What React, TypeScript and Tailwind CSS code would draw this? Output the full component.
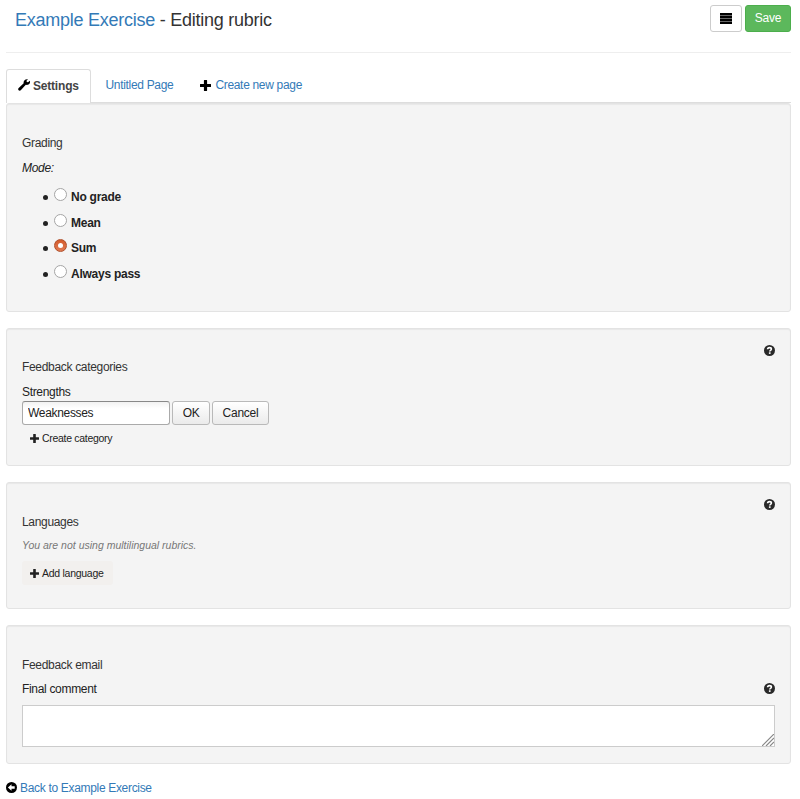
import type { ReactNode } from 'react';

const Plus = ({ className = 'h-[11px] w-[11px]' }: { className?: string }) => (
  <svg className={`block shrink-0 ${className}`} viewBox="0 0 11 11" fill="currentColor">
    <path d="M4.3 0h2.4a.4.4 0 0 1 .4.4v3.5h3.5a.4.4 0 0 1 .4.4v2.4a.4.4 0 0 1-.4.4H7.1v3.5a.4.4 0 0 1-.4.4H4.3a.4.4 0 0 1-.4-.4V7.1H.4a.4.4 0 0 1-.4-.4V4.3a.4.4 0 0 1 .4-.4h3.5V.4a.4.4 0 0 1 .4-.4z" />
  </svg>
);

const Wrench = () => (
  <svg className="mb-[2px] block h-3 w-3 shrink-0" viewBox="0 0 12 12" fill="#000">
    <path d="M10 .3 8.5 1.8l.3 1.1 1.2.3 1.9-1.5c.5 1.7-.1 3.1-1.4 3.8-.9.4-1.8.5-2.7.3L3 11.1c-.7.7-1.7.8-2.4.2-.6-.7-.6-1.6.1-2.3L5.7 4.3C5.1 2 7.2-.4 10 .3z" />
  </svg>
);

const Help = () => (
  <svg className="block h-[11px] w-[11px] shrink-0" viewBox="0 0 11 11">
    <circle cx="5.5" cy="5.5" r="5.5" fill="#292929" />
    <path d="M3.6 4.3C3.6 3.1 4.4 2.6 5.5 2.6s1.9.6 1.9 1.5c0 1.2-1.7 1.2-1.7 2.5" fill="none" stroke="#fff" strokeWidth="1.6" />
    <rect x="4.9" y="7.3" width="1.7" height="1.6" fill="#fff" />
  </svg>
);

const BackArrow = () => (
  <svg className="block h-[11px] w-[11px] shrink-0" viewBox="0 0 11 11">
    <circle cx="5.5" cy="5.5" r="5.5" fill="#000" />
    <path d="M1.9 5.5 5.5 2.2v2h3.2v2.6H5.5v2z" fill="#fff" />
  </svg>
);

const Panel = ({ className, children }: { className: string; children: ReactNode }) => (
  <section className={`flex w-[785px] flex-col rounded-[3px] border border-[#e3e3e3] bg-[#f4f4f4] px-[15px] shadow-[inset_0_1px_1px_rgba(0,0,0,0.05)] ${className}`}>
    {children}
  </section>
);

const Radio = ({ label, checked }: { label: string; checked?: boolean }) => (
  <li className="flex h-[25.8px] items-center">
    <span className="mt-[1px] h-[5px] w-[5px] rounded-full bg-[#222]" />
    <span
      className={`mb-[5px] ml-[6px] flex h-[13px] w-[13px] items-center justify-center rounded-full border ${
        checked ? 'border-[#b0502c] bg-linear-to-b from-[#d45a2a] to-[#e07a52]' : 'border-[#a5a5a5] bg-white'
      }`}
    >
      {checked && <span className="h-[5px] w-[5px] rounded-full bg-white" />}
    </span>
    <span className="ml-[4px] font-bold tracking-[-0.25px] text-[#222]">{label}</span>
  </li>
);

export default function App() {
  return (
    <div className="h-[799px] w-[800px] overflow-hidden bg-white pl-[6px] font-['Liberation_Sans',Arial,sans-serif] text-[12px] leading-[20px] tracking-[-0.32px] whitespace-nowrap text-[#333]">
      <header className="flex h-[53px] w-[785px] items-start border-b border-[#eee] pl-[9px]">
        <h1 className="mt-[9px] text-[18px] leading-[22px] tracking-[-0.25px]">
          <a className="text-[#337ab7]">Example Exercise</a> - Editing rubric
        </h1>
        <div className="mt-[5px] ml-auto flex gap-[3px]">
          <button className="flex h-[27px] w-8 items-center justify-center rounded-[3px] border border-[#ccc] bg-white">
            <svg className="block h-[11px] w-3" viewBox="0 0 12 11" fill="#000">
              <path fill="#666" d="M0 1h12v9H0z" />
              <path d="M0 0h12v2H0zM0 3h12v2H0zM0 6h12v2H0zM0 9h12v2H0z" />
            </svg>
          </button>
          <button className="h-[27px] w-[46px] rounded-[3px] border border-[#4cae4c] bg-[#5cb85c] pb-px tracking-[-0.2px] text-white">Save</button>
        </div>
      </header>

      <nav className="mt-4 flex h-[34px] w-[785px] border-b border-[#ddd]">
        <div className="flex h-[34px] w-[85px] items-center gap-[3px] rounded-t-[3px] border border-b-0 border-[#ddd] bg-white pb-px pl-[11px] font-bold tracking-[-0.2px] text-[#444]">
          <Wrench />
          Settings
        </div>
        <a className="ml-[14.5px] leading-[33px] text-[#337ab7]">Untitled Page</a>
        <a className="ml-[27px] flex items-center gap-[4px] text-[#337ab7]">
          <Plus className="h-[11px] w-[11px] text-black" />
          <span className="pb-px">Create new page</span>
        </a>
      </nav>

      <Panel className="h-[209px]">
        <h2 className="mt-[29px]">Grading</h2>
        <p className="mt-[5px] text-[#222] italic">Mode:</p>
        <ul className="mt-[6px] pl-[21px]">
          <Radio label="No grade" />
          <Radio label="Mean" />
          <Radio label="Sum" checked />
          <Radio label="Always pass" />
        </ul>
      </Panel>

      <Panel className="mt-4 h-[138px]">
        <div className="mt-[16px] flex h-[11px] justify-end"><Help /></div>
        <h2 className="mt-[1px]">Feedback categories</h2>
        <p className="mt-[5px] text-[#222]">Strengths</p>
        <div className="-mt-px flex gap-[2px] text-[#222]">
          <input
            readOnly
            value="Weaknesses"
            className="h-[24px] w-[148px] rounded-[3px] border border-[#aaa] border-t-[#888] bg-linear-to-b from-[#f2f2f2] to-white to-30% px-[5px] tracking-[-0.32px] outline-none"
          />
          <button className="h-[24px] w-[38px] rounded-[3px] border border-[#b9b9b9] bg-linear-to-b from-white to-[#ebebeb]">OK</button>
          <button className="h-[24px] w-[57px] rounded-[3px] border border-[#b9b9b9] bg-linear-to-b from-white to-[#ebebeb] tracking-[-0.25px]">Cancel</button>
        </div>
        <a className="mt-[3px] flex items-center gap-[3px] pl-[8px] text-[10.5px] tracking-[-0.3px] text-[#222]">
          <Plus className="h-[9px] w-[9px]" />
          Create category
        </a>
      </Panel>

      <Panel className="mt-4 h-[127px]">
        <div className="mt-[16px] flex h-[11px] justify-end"><Help /></div>
        <h2 className="mt-[2px]">Languages</h2>
        <p className="mt-[3px] text-[10.5px] tracking-[0px] text-[#777] italic">You are not using multilingual rubrics.</p>
        <a className="mt-[6px] flex h-[24px] w-[91px] items-center gap-[3px] rounded-[3px] bg-[#f2f0ee] pl-[8px] text-[10.5px] tracking-[-0.27px] text-[#222]">
          <Plus className="h-[9px] w-[9px]" />
          Add language
        </a>
      </Panel>

      <Panel className="mt-4 h-[139px]">
        <h2 className="mt-[29px]">Feedback email</h2>
        <div className="mt-[4px] flex items-center justify-between text-[#222]">
          Final comment
          <span className="pb-px"><Help /></span>
        </div>
        <div className="mt-[6px] flex h-[42px] items-end justify-end border border-[#ccc] bg-white">
          <svg className="block h-[12px] w-[12px]" viewBox="0 0 12 12" stroke="#888" strokeWidth="1.2">
            <path d="M0 12 12 0M4 12l8-8M8 12l4-4" />
          </svg>
        </div>
      </Panel>

      <footer className="mt-[14px] flex items-center gap-[3px] text-[#337ab7]">
        <span className="pb-px"><BackArrow /></span>
        Back to Example Exercise
      </footer>
    </div>
  );
}
